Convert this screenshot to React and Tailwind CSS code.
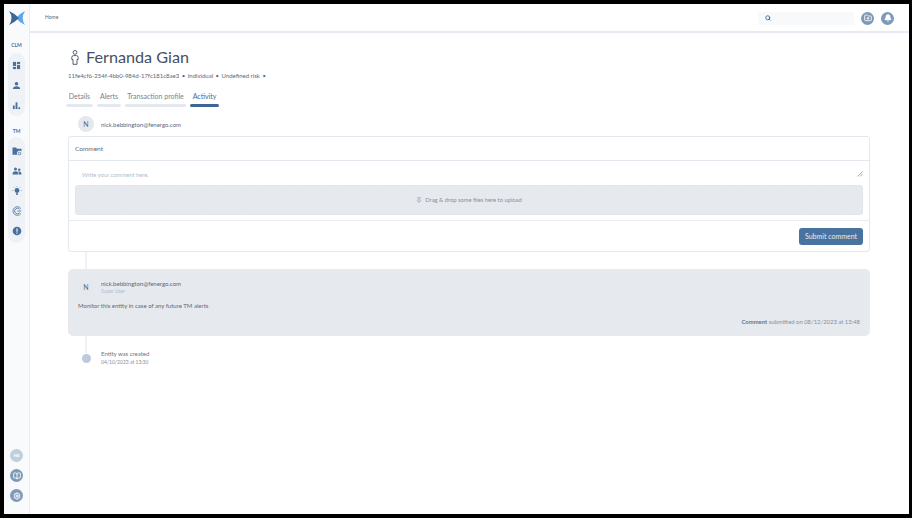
import { Search, FolderPlus, Bell, BookOpen, Settings, Pin } from "lucide-react";

const font = { fontFamily: "Lato, 'Noto Sans', sans-serif" };

const SideIcon = ({ children }) => (
  <div className="flex h-[20px] w-[17px] items-center justify-center text-[#4a6f9c]">{children}</div>
);

const Glyph = ({ children, size = 9 }) => (
  <svg viewBox="0 0 10 10" width={size} height={size} fill="currentColor">{children}</svg>
);

const RoundButton = ({ children, className = "" }) => (
  <div className={`flex h-[13px] w-[13px] items-center justify-center rounded-full bg-[#7f9ab8] text-white ${className}`}>
    {children}
  </div>
);

const Sidebar = () => (
  <aside className="flex h-full w-[26px] shrink-0 flex-col items-center border-r border-[#e8edf3] bg-[#f8fafc]">
    <svg viewBox="0 0 16 16" className="mt-[6px] h-[16px] w-[16px]">
      <path d="M16 1 Q10 4 7 8 Q10 12 16 15 Q11.5 8 16 1Z" fill="#5aa7ee" />
      <path d="M0 1 Q5 3 10 8 Q5 13 0 15 Q5 8 0 1Z" fill="#3f6795" />
    </svg>
    <div className="mt-[16px] text-[5px] font-bold leading-[6px] text-[#4a6f9c]">CLM</div>
    <div className="mt-[5px] flex h-[63px] w-[17px] flex-col items-center justify-center rounded-full bg-[#eef2f6] pt-[2px]">
      <SideIcon>
        <Glyph>
          <rect x="1" y="1" width="3.5" height="4.5" />
          <rect x="1" y="6.5" width="3.5" height="2.5" />
          <rect x="5.5" y="1" width="3.5" height="2.5" />
          <rect x="5.5" y="4.5" width="3.5" height="4.5" />
        </Glyph>
      </SideIcon>
      <SideIcon>
        <Glyph>
          <circle cx="5" cy="3" r="2" />
          <path d="M1 9 Q1 5.8 5 5.8 Q9 5.8 9 9Z" />
        </Glyph>
      </SideIcon>
      <SideIcon>
        <Glyph>
          <rect x="1" y="5" width="2" height="4" />
          <rect x="4" y="1.5" width="2" height="7.5" />
          <rect x="7" y="7" width="2" height="2" />
        </Glyph>
      </SideIcon>
    </div>
    <div className="mt-[12px] text-[5px] font-bold leading-[6px] text-[#4a6f9c]">TM</div>
    <div className="mt-[3px] flex h-[106px] w-[17px] flex-col items-center justify-center rounded-full bg-[#eef2f6] pt-[2px]">
      <SideIcon>
        <Glyph size={10}>
          <path d="M0.5 1.5 H4 L5 2.7 H9.5 V5.5 A2.5 2.5 0 0 0 5.6 8.8 H0.5Z" />
          <circle cx="7.5" cy="7.5" r="1.3" fill="none" stroke="currentColor" strokeWidth="0.8" />
        </Glyph>
      </SideIcon>
      <SideIcon>
        <Glyph size={10}>
          <circle cx="3.5" cy="3" r="1.5" />
          <circle cx="7.2" cy="3.8" r="1.2" />
          <path d="M0.5 8.5 Q0.5 5.2 3.5 5.2 Q6.5 5.2 6.5 8.5Z" />
          <path d="M7 8.5 Q7 6.5 6.3 5.6 Q9.5 5 9.5 8.5Z" />
        </Glyph>
      </SideIcon>
      <SideIcon>
        <Glyph size={10}>
          <circle cx="5" cy="4.5" r="2.4" />
          <rect x="4" y="7.2" width="2" height="1.6" />
          <path d="M5 0.3 V1.2 M1.2 4.5 H0.3 M9.7 4.5 H8.8 M2.2 1.7 L1.6 1.1 M7.8 1.7 L8.4 1.1" stroke="currentColor" strokeWidth="0.6" />
        </Glyph>
      </SideIcon>
      <SideIcon>
        <Glyph size={10}>
          <g fill="none" stroke="currentColor" strokeWidth="0.8">
            <path d="M8.8 2.5 A4.3 4.3 0 1 0 8.8 7.5" />
            <path d="M7.8 3.4 A2.8 2.8 0 1 0 7.8 6.6" />
            <path d="M9.3 5 H5.2" />
          </g>
        </Glyph>
      </SideIcon>
      <SideIcon>
        <Glyph size={10}>
          <circle cx="5" cy="5" r="4.3" />
          <rect x="4.4" y="2.4" width="1.2" height="3.4" fill="#eef2f6" />
          <rect x="4.4" y="6.5" width="1.2" height="1.2" fill="#eef2f6" />
        </Glyph>
      </SideIcon>
    </div>
    <div className="mt-auto mb-[12px] flex flex-col items-center gap-[7px]">
      <div className="flex h-[13px] w-[13px] items-center justify-center rounded-full bg-[#c0cfdd] text-[4px] font-bold text-white">NB</div>
      <RoundButton><BookOpen size={8} strokeWidth={2.5} /></RoundButton>
      <RoundButton><Settings size={8} strokeWidth={3} /></RoundButton>
    </div>
  </aside>
);

const Header = () => (
  <header className="flex h-[29px] shrink-0 items-center border-b-2 border-[#e6ebf1] pl-[15px] pr-[15px] pt-[1px]">
    <span className="text-[5px] text-[#5d6877]">Home</span>
    <div className="ml-auto flex h-[13px] w-[96px] items-center bg-[#f7f9fb] pl-[7px] text-[#3f6795]">
      <Search size={6} strokeWidth={3.5} />
    </div>
    <RoundButton className="ml-[7px]"><FolderPlus size={8} strokeWidth={2.5} /></RoundButton>
    <RoundButton className="ml-[7px]"><Bell size={8} strokeWidth={2.5} fill="currentColor" /></RoundButton>
  </header>
);

const Tab = ({ label, width, active }) => (
  <div className="flex flex-col" style={{ width }}>
    <span className={`text-center text-[7px] leading-[12px] ${active ? "text-[#3f6795]" : "text-[#77818f]"}`}>{label}</span>
    <span className={`mt-[2px] h-[3px] rounded-full ${active ? "bg-[#3f6795]" : "bg-[#e4e9ef]"}`} />
  </div>
);

const Avatar = () => (
  <div className="flex h-[16px] w-[16px] shrink-0 items-center justify-center rounded-full bg-[#e5e9ee] text-[7px] text-[#5d6877]">N</div>
);

const Connector = ({ height }) => (
  <div className="ml-[17px] w-[2px] bg-[#eef1f5]" style={{ height }} />
);

const CommentBox = () => (
  <div className="rounded-[3px] border border-[#e3e8ef]">
    <div className="flex h-[24px] items-center border-b border-[#e3e8ef] px-[6px] text-[6.5px] text-[#5d6877]">Comment</div>
    <div className="h-[60px] border-b border-[#e8ecf1] px-[6px]">
      <div className="flex h-[24px] items-start justify-between pl-[7px] pt-[10px] text-[5.8px] leading-[7px] text-[#b0bdcc]">
        <span>Write your comment here.</span>
        <svg viewBox="0 0 6 6" className="h-[6px] w-[6px] text-[#6b7280]">
          <path d="M0.5 5.5 L5.5 0.5 M3 5.5 L5.5 3" stroke="currentColor" strokeWidth="0.6" />
        </svg>
      </div>
      <div className="flex h-[30px] items-center justify-center gap-[3px] rounded-[3px] border border-dashed border-[#dfe4ea] bg-[#e6e9ee] text-[5.8px] text-[#868f9c]">
        <Pin size={6} />
        <span>Drag &amp; drop some files here to upload</span>
      </div>
    </div>
    <div className="flex h-[30px] items-center justify-end px-[6px]">
      <button className="flex h-[17px] w-[64px] items-center justify-center rounded-[3px] bg-[#48739f] text-[7px] text-[#e6edf4]">
        Submit comment
      </button>
    </div>
  </div>
);

const CommentCard = () => (
  <div className="h-[67px] rounded-[5px] bg-[#e6e9ee] px-[10px] pt-[10px]">
    <div className="flex items-center gap-[7px]">
      <Avatar />
      <div className="flex flex-col">
        <span className="text-[6px] leading-[8px] text-[#5d6877]">nick.bebbington@fenergo.com</span>
        <span className="text-[5px] leading-[7px] text-[#b0bdcc]">Super User</span>
      </div>
    </div>
    <p className="mt-[7px] text-[6px] leading-[8px] text-[#5d6877]">Monitor this entity in case of any future TM alerts</p>
    <p className="mt-[8px] text-right text-[5.9px] leading-[8px] text-[#868f9c]">
      <span className="font-bold text-[#6b7686]">Comment</span> submitted on 08/12/2023 at 13:48
    </p>
  </div>
);

const App = () => (
  <div className="h-[518px] w-[912px] overflow-hidden bg-black pb-[4px] pl-[4px] pr-[3px] pt-[4px]" style={font}>
    <div className="flex h-full bg-white">
      <Sidebar />
      <main className="flex min-w-0 flex-1 flex-col">
        <Header />
        <div className="pl-[38px] pr-[39px] pt-[12px]">
          <div className="flex items-center gap-[7px] pl-[3px] text-[#46505e]">
            <svg viewBox="0 0 8 15" className="h-[15px] w-[8px]" fill="none" stroke="currentColor" strokeWidth="0.9">
              <circle cx="4" cy="2.4" r="1.9" />
              <path d="M0.8 7.5 Q0.8 5.6 2.5 5.6 H5.5 Q7.2 5.6 7.2 7.5 V9.5 H6 V14.3 H2 V9.5 H0.8Z" />
            </svg>
            <h1 className="text-[16.2px] leading-[24px]">Fernanda Gian</h1>
          </div>
          <div className="mt-[3px] flex items-center gap-[2.5px] text-[6px] leading-[8px] text-[#5d6877]">
            <span>11fe4cf6-254f-4bb0-984d-17fc181c8ae3</span>
            <span>•</span>
            <span>Individual</span>
            <span>•</span>
            <span>Undefined risk</span>
            <span>•</span>
          </div>
          <div className="-ml-[2px] mt-[10px] flex gap-[4px]">
            <Tab label="Details" width={27} />
            <Tab label="Alerts" width={24} />
            <Tab label="Transaction profile" width={61} />
            <Tab label="Activity" width={29} active />
          </div>
          <div className="mt-[9px] flex items-center gap-[7px] pl-[10px]">
            <Avatar />
            <span className="text-[6px] text-[#5d6877]">nick.bebbington@fenergo.com</span>
          </div>
          <div className="mt-[4px]">
            <CommentBox />
          </div>
          <Connector height={17} />
          <CommentCard />
          <Connector height={17} />
          <div className="-mt-[4px] flex items-center gap-[10px] pl-[14px]">
            <div className="h-[9px] w-[9px] shrink-0 rounded-full bg-[#bccbdb]" />
            <div className="flex flex-col">
              <span className="text-[6px] leading-[9px] text-[#6b7686]">Entity was created</span>
              <span className="text-[5px] leading-[9px] text-[#868f9c]">04/10/2023 at 13:30</span>
            </div>
          </div>
        </div>
      </main>
    </div>
  </div>
);

export default App;
